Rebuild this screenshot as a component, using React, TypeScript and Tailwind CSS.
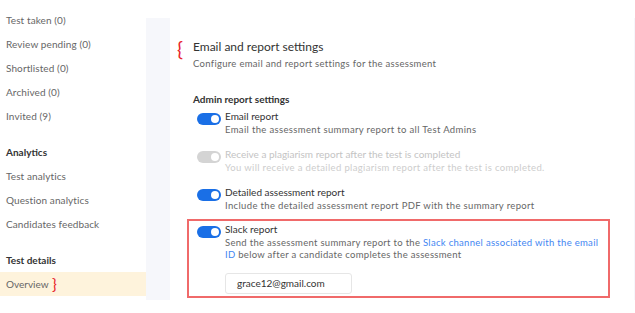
import React from 'react';

const font = { fontFamily: 'Lato, "Open Sans", sans-serif' };

function Toggle({ disabled = false }: { disabled?: boolean }) {
  return (
    <div
      className={`mt-[4px] flex h-[12px] w-[24px] shrink-0 items-center justify-end rounded-full pr-[2px] ${
        disabled ? 'bg-[#d4d4d4]' : 'bg-[#1a6fe6]'
      }`}
    >
      <div className="h-[8px] w-[8px] rounded-full bg-white" />
    </div>
  );
}

function Setting({
  label,
  desc,
  disabled = false,
}: {
  label: string;
  desc: React.ReactNode;
  disabled?: boolean;
}) {
  return (
    <div className="flex items-start gap-[4px]">
      <Toggle disabled={disabled} />
      <div>
        <div className={`text-[10px] leading-[15px] ${disabled ? 'text-[#c4c4c4]' : 'text-[#333]'}`}>{label}</div>
        <div className={`text-[9.5px] leading-[12px] tracking-[0.35px] ${disabled ? 'text-[#cdcdcd]' : 'text-[#666]'}`}>{desc}</div>
      </div>
    </div>
  );
}

export default function App() {
  const candidates = ['Test taken (0)', 'Review pending (0)', 'Shortlisted (0)', 'Archived (0)', 'Invited (9)'];
  const analytics = ['Test analytics', 'Question analytics', 'Candidates feedback'];

  return (
    <div className="flex h-[313px] w-[635px] overflow-hidden bg-white" style={font}>
      {/* Sidebar */}
      <div className="w-[146px] shrink-0 pt-[17px]">
        <div className="h-full overflow-hidden">
          <div className="-mt-[9px]">
            {candidates.map((c) => (
              <div key={c} className="h-[24px] pl-[6px] text-[10px] leading-[24px] tracking-[0.1px] text-[#666]">
                {c}
              </div>
            ))}
            <div className="mt-[12px] h-[24px] pl-[6px] text-[10px] font-bold leading-[24px] text-[#333]">Analytics</div>
            {analytics.map((c) => (
              <div key={c} className="h-[24px] pl-[6px] text-[10px] leading-[24px] tracking-[0.1px] text-[#666]">
                {c}
              </div>
            ))}
            <div className="mt-[12px] h-[24px] pl-[6px] text-[10px] font-bold leading-[24px] text-[#333]">Test details</div>
            <div className="relative h-[24px] bg-[#fef3dc] pl-[6px] text-[10px] leading-[24px] text-[#666]">
              Overview
              <span className="absolute left-[52px] top-[2px] text-[16px] leading-[20px] text-[#e8262c]">{'}'}</span>
            </div>
          </div>
        </div>
      </div>

      {/* Main area */}
      <div className="mt-[18px] flex h-[282px] flex-1 bg-[#f6f7fb] pl-[24px] pr-[1px]">
        <div className="relative flex-1 bg-white pl-[23px] pt-[21px]">
          <span className="absolute left-[7px] top-[18px] text-[20px] leading-[24px] text-[#e8262c]">{'{'}</span>
          <div className="text-[12px] leading-[16px] text-[#333]">Email and report settings</div>
          <div className="mt-[2px] text-[9.5px] leading-[14px] tracking-[0.3px] text-[#666]">
            Configure email and report settings for the assessment
          </div>

          <div className="mt-[21px] text-[10px] font-bold leading-[14px] text-[#333]">Admin report settings</div>

          <div className="mt-[3px] flex flex-col gap-[11px] pl-[4px]">
            <Setting label="Email report" desc="Email the assessment summary report to all Test Admins" />
            <Setting
              disabled
              label="Receive a plagiarism report after the test is completed"
              desc="You will receive a detailed plagiarism report after the test is completed."
            />
            <Setting
              label="Detailed assessment report"
              desc="Include the detailed assessment report PDF with the summary report"
            />
          </div>

          <div className="-ml-[6px] mt-[7px] w-[423px] border-2 border-[#f06a6a] pb-[2px] pl-[8px] pt-[1px]">
            <div className="flex items-start gap-[4px]">
              <Toggle />
              <div>
                <div className="text-[10px] leading-[15px] text-[#333]">Slack report</div>
                <div className="text-[9.5px] leading-[12px] tracking-[0.3px] text-[#666]">
                  Send the assessment summary report to the{' '}
                  <span className="text-[#3f86f2]">Slack channel associated with the email ID</span> below after a
                  candidate completes the assessment
                </div>
                <div className="mt-[12px] flex h-[21px] w-[127px] items-center rounded-[3px] border border-[#e6e6e6] pl-[11px] text-[10px] text-[#333]">
                  grace12@gmail.com
                </div>
              </div>
            </div>
          </div>
        </div>
      </div>
    </div>
  );
}
